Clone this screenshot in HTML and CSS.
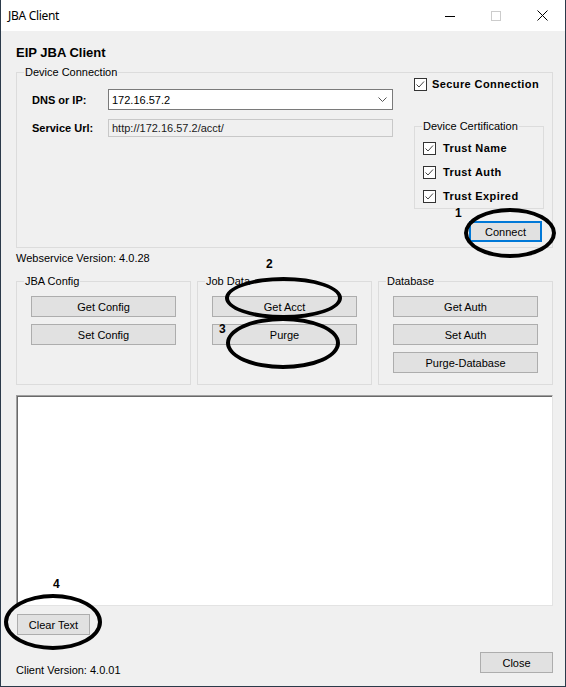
FILE: index.html
```html
<!DOCTYPE html>
<html lang="en">
<head>
    <meta charset="UTF-8">
    <meta name="viewport" content="width=device-width, initial-scale=1.0">
    <title>JBA Client</title>
    <link rel="stylesheet" href="styles.css">
</head>
<body>

    <div class="window">

        <!-- Title bar -->
        <div class="titlebar">
            <span class="title">JBA Client</span>
            <div class="caption-buttons">
                <span class="cap-btn">
                    <svg width="10" height="10"><line x1="0" y1="5.5" x2="10" y2="5.5" stroke="#000"/></svg>
                </span>
                <span class="cap-btn">
                    <svg width="10" height="10"><rect x="0.5" y="0.5" width="9" height="9" fill="none" stroke="#cccccc"/></svg>
                </span>
                <span class="cap-btn">
                    <svg width="11" height="11"><path d="M0.5 0.5 L10.5 10.5 M10.5 0.5 L0.5 10.5" stroke="#000" fill="none"/></svg>
                </span>
            </div>
        </div>

        <!-- Form client area -->
        <div class="client">
            <h1 class="app-title">EIP JBA Client</h1>

            <div class="group device-group">
                <div class="group-title">Device Connection</div>
                <div class="device-body">
                    <div class="conn-fields">
                        <div class="field-row">
                            <span class="field-label">DNS or IP:</span>
                            <div class="combo">
                                <span>172.16.57.2</span>
                                <svg class="chevron" width="9" height="5"><polyline points="0.5,0.5 4.5,4.5 8.5,0.5" fill="none" stroke="#555"/></svg>
                            </div>
                        </div>
                        <div class="field-row">
                            <span class="field-label">Service Url:</span>
                            <div class="readonly-box">http://172.16.57.2/acct/</div>
                        </div>
                    </div>

                    <div class="conn-side">
                        <label class="check secure">
                            <svg width="13" height="13"><rect x="0.5" y="0.5" width="12" height="12" fill="#fff" stroke="#333"/><polyline points="2.5,6.5 5,9 10,3.5" fill="none" stroke="#444"/></svg>
                            Secure Connection
                        </label>

                        <div class="group cert-group">
                            <div class="group-title">Device Certification</div>
                            <div class="trust-list">
                                <label class="check trust">
                                    <svg width="13" height="13"><rect x="0.5" y="0.5" width="12" height="12" fill="#fff" stroke="#333"/><polyline points="2.5,6.5 5,9 10,3.5" fill="none" stroke="#444"/></svg>
                                    Trust Name
                                </label>
                                <label class="check trust">
                                    <svg width="13" height="13"><rect x="0.5" y="0.5" width="12" height="12" fill="#fff" stroke="#333"/><polyline points="2.5,6.5 5,9 10,3.5" fill="none" stroke="#444"/></svg>
                                    Trust Auth
                                </label>
                                <label class="check trust">
                                    <svg width="13" height="13"><rect x="0.5" y="0.5" width="12" height="12" fill="#fff" stroke="#333"/><polyline points="2.5,6.5 5,9 10,3.5" fill="none" stroke="#444"/></svg>
                                    Trust Expired
                                </label>
                            </div>
                        </div>

                        <button class="btn btn-focus connect-btn">Connect</button>
                    </div>
                </div>
            </div>

            <div class="status">Webservice Version: 4.0.28</div>

            <div class="action-groups">
                <div class="group small-group">
                    <div class="group-title">JBA Config</div>
                    <div class="btn-stack">
                        <button class="btn">Get Config</button>
                        <button class="btn">Set Config</button>
                    </div>
                </div>
                <div class="group small-group">
                    <div class="group-title">Job Data</div>
                    <div class="btn-stack">
                        <button class="btn">Get Acct</button>
                        <button class="btn">Purge</button>
                    </div>
                </div>
                <div class="group small-group">
                    <div class="group-title">Database</div>
                    <div class="btn-stack">
                        <button class="btn">Get Auth</button>
                        <button class="btn">Set Auth</button>
                        <button class="btn">Purge-Database</button>
                    </div>
                </div>
            </div>

            <textarea class="output"></textarea>

            <button class="btn clear-btn">Clear Text</button>

            <div class="footer">
                <span class="client-version">Client Version: 4.0.01</span>
                <button class="btn close-btn">Close</button>
            </div>
        </div>

        <!-- Hand-drawn annotations -->
        <div class="mark mark-1"></div>
        <div class="mark mark-2"></div>
        <div class="mark mark-3"></div>
        <div class="mark mark-4"></div>
        <span class="note note-1">1</span>
        <span class="note note-2">2</span>
        <span class="note note-3">3</span>
        <span class="note note-4">4</span>
    </div>

</body>
</html>
```

FILE: styles.css
```css
body {
    margin: 0;
    padding: 0;
    font-family: "Liberation Sans", Arial, sans-serif;
    font-size: 11px;
    color: #000;
    background-color: #f0f0f0;
}
.window {
    position: relative;
    width: 566px;
    height: 687px;
    box-sizing: border-box;
    border: 1px solid #2b3a4a;
    border-top: none;
    background-color: #f0f0f0;
    overflow: hidden;
}

/* Title bar */
.titlebar {
    height: 31px;
    display: flex;
    align-items: center;
    background-color: #fff;
}
.title {
    padding-left: 7px;
    font-family: "Noto Sans", sans-serif;
    font-size: 12px;
    letter-spacing: -0.3px;
}
.caption-buttons {
    margin-left: auto;
    display: flex;
    height: 100%;
}
.cap-btn {
    width: 46px;
    display: flex;
    align-items: center;
    justify-content: center;
}
.cap-btn svg {
    display: block;
}

/* Client area */
.client {
    padding: 0 12px 0 15px;
}
.app-title {
    margin: 14px 0 11px;
    font-size: 13px;
    line-height: 16px;
    font-weight: bold;
}
.group {
    box-sizing: border-box;
    border: 1px solid #dcdcdc;
}
.group-title {
    width: fit-content;
    margin: -7px 0 -4px 7px;
    padding: 0 1px;
    line-height: 13px;
    background-color: #f0f0f0;
}

/* Device connection */
.device-group {
    height: 176px;
}
.device-body {
    display: flex;
    justify-content: space-between;
}
.conn-fields {
    display: flex;
    flex-direction: column;
    gap: 9px;
    padding: 14px 0 0 15px;
}
.field-row {
    display: flex;
    align-items: center;
}
.field-label {
    width: 76px;
    font-weight: bold;
}
.combo {
    width: 285px;
    height: 21px;
    box-sizing: border-box;
    display: flex;
    align-items: center;
    padding-left: 3px;
    border: 1px solid #7a7a7a;
    background-color: #fff;
}
.chevron {
    display: block;
    margin-left: auto;
    margin-right: 5px;
}
.readonly-box {
    width: 285px;
    height: 18px;
    box-sizing: border-box;
    padding-left: 3px;
    line-height: 16px;
    border: 1px solid #c8c8c8;
    background-color: #f0f0f0;
    color: #1a1a1a;
}
.conn-side {
    width: 130px;
    margin-right: 8px;
    display: flex;
    flex-direction: column;
}
.check {
    display: flex;
    align-items: center;
    font-weight: bold;
    letter-spacing: 0.4px;
}
.check svg {
    display: block;
    flex-shrink: 0;
}
.secure {
    margin-top: 2px;
    height: 14px;
    gap: 5px;
}
.cert-group {
    margin-top: 35px;
}
.trust-list {
    padding: 7px 0 0 8px;
}
.trust {
    height: 24px;
    gap: 7px;
}
.connect-btn {
    align-self: flex-end;
    width: 73px;
    margin: 12px 2px 0 0;
}

/* Buttons */
.btn {
    height: 21px;
    padding: 0;
    font-family: "Liberation Sans", Arial, sans-serif;
    font-size: 11px;
    color: #000;
    background-color: #e1e1e1;
    border: 1px solid #adadad;
}
.btn-focus {
    border-color: #0078d7;
    box-shadow: inset 0 0 0 1px #0078d7;
}

.status {
    margin-top: 4px;
    line-height: 13px;
}

/* Action group boxes */
.action-groups {
    margin-top: 16px;
    display: grid;
    grid-template-columns: repeat(3, 1fr);
    gap: 6px;
}
.small-group {
    height: 104px;
}
.btn-stack {
    display: flex;
    flex-direction: column;
    gap: 7px;
    padding: 12px 14px 0;
}

/* Output box */
.output {
    display: block;
    width: 537px;
    height: 211px;
    box-sizing: border-box;
    margin-top: 10px;
    resize: none;
    background-color: #fff;
    border-style: solid;
    border-width: 1px;
    border-color: #a0a0a0 #e3e3e3 #e3e3e3 #a0a0a0;
    box-shadow: inset 1px 1px 0 #696969;
}
.clear-btn {
    display: block;
    width: 73px;
    margin: 8px 0 0 1px;
}
.footer {
    display: flex;
    justify-content: space-between;
    align-items: flex-start;
    margin-top: 17px;
}
.client-version {
    margin-top: 12px;
    line-height: 13px;
}
.close-btn {
    width: 73px;
}

/* Annotations drawn on the screenshot */
.mark {
    position: absolute;
    box-sizing: border-box;
    border: 4px solid #000;
    border-radius: 50%;
}
.mark-1 { left: 463px; top: 208px; width: 92px; height: 50px; }
.mark-2 { left: 224px; top: 277px; width: 117px; height: 42px; }
.mark-3 { left: 225px; top: 317px; width: 114px; height: 52px; }
.mark-4 { left: 3px; top: 594px; width: 98px; height: 56px; }
.note {
    position: absolute;
    font-size: 12px;
    font-weight: bold;
    line-height: 16px;
}
.note-1 { left: 454px; top: 205px; }
.note-2 { left: 265px; top: 256px; }
.note-3 { left: 218px; top: 321px; }
.note-4 { left: 52px; top: 576px; }
```
